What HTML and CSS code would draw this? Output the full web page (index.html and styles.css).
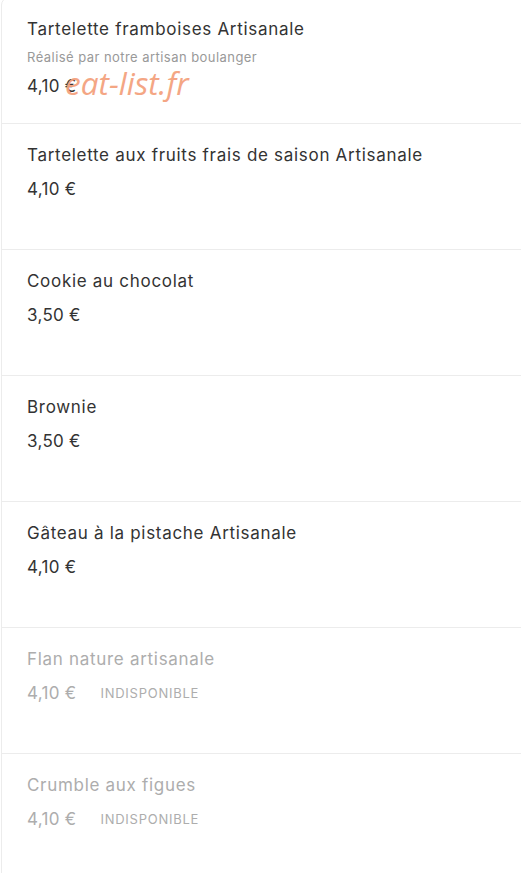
FILE: index.html
```html
<!DOCTYPE html>
<html lang="fr">
<head>
    <meta charset="UTF-8">
    <meta name="viewport" content="width=device-width, initial-scale=1.0">
    <title>Pâtisseries</title>
    <link rel="stylesheet" href="styles.css">
</head>
<body>
    <div class="card">
        <ul class="product-list">
            <li class="product">
                <div class="product-name">Tartelette framboises Artisanale</div>
                <div class="product-desc">Réalisé par notre artisan boulanger</div>
                <div class="product-price">4,10 €</div>
                <span class="watermark">eat-list.fr</span>
            </li>
            <li class="product">
                <div class="product-name">Tartelette aux fruits frais de saison Artisanale</div>
                <div class="product-price">4,10 €</div>
            </li>
            <li class="product">
                <div class="product-name">Cookie au chocolat</div>
                <div class="product-price">3,50 €</div>
            </li>
            <li class="product">
                <div class="product-name">Brownie</div>
                <div class="product-price">3,50 €</div>
            </li>
            <li class="product">
                <div class="product-name">Gâteau à la pistache Artisanale</div>
                <div class="product-price">4,10 €</div>
            </li>
            <li class="product unavailable">
                <div class="product-name">Flan nature artisanale</div>
                <div class="product-price">4,10 € <span class="badge">Indisponible</span></div>
            </li>
            <li class="product unavailable">
                <div class="product-name">Crumble aux figues</div>
                <div class="product-price">4,10 € <span class="badge">Indisponible</span></div>
            </li>
        </ul>
    </div>
</body>
</html>
```

FILE: styles.css
```css
* {
    box-sizing: border-box;
    margin: 0;
    padding: 0;
}

body {
    background-color: white;
    font-family: Inter, 'Noto Sans', sans-serif;
    color: #333;
    overflow: hidden;
}

.card {
    margin-left: 1px;
    margin-top: -3px;
    width: 540px;
    border: 1px solid #ececec;
    border-radius: 8px;
    overflow: hidden;
}

.product-list {
    list-style: none;
}

.product {
    position: relative;
    height: 126px;
    padding: 19px 25px 0;
    border-bottom: 1px solid #ececec;
}

.product-name {
    font-size: 17px;
    line-height: 24px;
    letter-spacing: 0.7px;
    margin-bottom: 10px;
}

.product-desc {
    font-size: 13px;
    line-height: 18px;
    letter-spacing: 0.45px;
    color: #999;
    margin-top: -3px;
    margin-bottom: 8px;
}

.product-price {
    font-size: 17px;
    line-height: 24px;
    letter-spacing: 0.3px;
    display: flex;
    align-items: center;
    gap: 24px;
}

.badge {
    font-size: 13px;
    letter-spacing: 0.75px;
    text-transform: uppercase;
}

.unavailable {
    color: #adadad;
}

.watermark {
    position: absolute;
    left: 63px;
    top: 63px;
    font-family: 'Open Sans', sans-serif;
    font-style: italic;
    font-size: 31.5px;
    color: #f4a27e;
    opacity: 0.95;
}
```
